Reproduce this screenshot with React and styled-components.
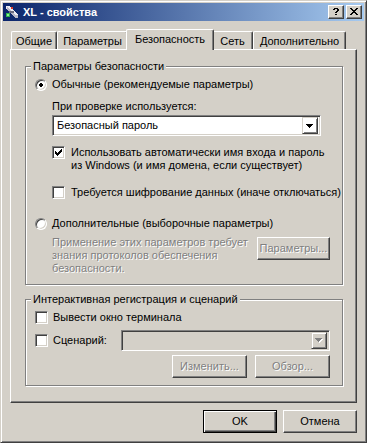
import React from 'react'
import styled, { createGlobalStyle } from 'styled-components'

const FACE = '#d4d0c8'
const SHADOW = '#808080'
const DARK = '#404040'

const GlobalStyle = createGlobalStyle`
  html, body {
    margin: 0;
    padding: 0;
    background: ${FACE};
  }
  body {
    font-family: "Liberation Sans", Arial, sans-serif;
    font-size: 11px;
    color: #000;
  }
`

// pixel-art helper for the little classic glyphs
const toPath = (rows) =>
  rows
    .map((r, y) => [...r].map((c, x) => (c === 'X' ? `M${x} ${y}h1v1h-1z` : '')).join(''))
    .join('')

const CHECK = ['......X', '.....XX', 'X...XXX', 'XX.XXX.', 'XXXXX..', '.XXX...', '..X....']
const CLOSE = ['XX....XX', '.XX..XX.', '..XXXX..', '...XX...', '..XXXX..', '.XX..XX.', 'XX....XX']
const HELP = ['.XXXX.', 'XX..XX', '....XX', '...XX.', '..XX..', '......', '..XX..']
const ARROW = ['XXXXXXX', '.XXXXX.', '..XXX..', '...X...']
const DOT = ['.XX.', 'XXXX', 'XXXX', '.XX.']

const Pixels = ({ rows, color = '#000', etched }) => {
  const w = rows[0].length
  const h = rows.length
  const d = toPath(rows)
  return (
    <svg width={etched ? w + 1 : w} height={etched ? h + 1 : h} shapeRendering="crispEdges">
      {etched && <path d={d} fill="#fff" transform="translate(1 1)" />}
      <path d={d} fill={etched ? SHADOW : color} />
    </svg>
  )
}

const Window = styled.div`
  box-sizing: border-box;
  width: 367px;
  height: 443px;
  background: ${FACE};
  border: 1px solid;
  border-color: ${FACE} ${DARK} ${DARK} ${FACE};
  box-shadow: inset 1px 1px 0 #fff, inset -1px -1px 0 ${SHADOW};
  padding: 2px;
  display: flex;
  flex-direction: column;
`

const TitleBar = styled.div`
  height: 18px;
  display: flex;
  align-items: center;
  padding: 0 2px 0 1px;
  background: linear-gradient(to right, #0a246a, #a6caf0);
  color: #fff;
`

const TitleText = styled.span`
  flex: 1;
  margin-left: 3px;
  font-weight: bold;
  font-size: 11px;
  line-height: 13px;
`

const CaptionButton = styled.div`
  box-sizing: border-box;
  width: 16px;
  height: 14px;
  margin-left: ${(p) => p.$gap || 0}px;
  background: ${FACE};
  border: 1px solid;
  border-color: #fff ${DARK} ${DARK} #fff;
  box-shadow: inset -1px -1px 0 ${SHADOW};
  display: flex;
  align-items: center;
  justify-content: center;
  padding: 0 1px 1px 0;
`

const Body = styled.div`
  flex: 1;
  margin-top: 1px;
  padding: 7px;
  display: flex;
  flex-direction: column;
`

const TabStrip = styled.div`
  display: flex;
  align-items: flex-end;
  height: 20px;
  padding-left: 1px;
`

const Tab = styled.div`
  position: relative;
  z-index: ${(p) => (p.$active ? 2 : 1)};
  box-sizing: border-box;
  width: ${(p) => (p.$active ? p.$w + 4 : p.$w)}px;
  height: ${(p) => (p.$active ? 21 : 18)}px;
  margin: 0 ${(p) => (p.$active ? -2 : 0)}px ${(p) => (p.$active ? -1 : 0)}px;
  padding-top: 3px;
  background: ${FACE};
  border-top: 1px solid #fff;
  border-left: 1px solid #fff;
  border-right: 1px solid ${DARK};
  border-radius: 2px 2px 0 0;
  box-shadow: inset -1px 0 0 ${SHADOW};
  text-align: center;
  line-height: 13px;
  white-space: nowrap;
`

const Panel = styled.div`
  box-sizing: border-box;
  height: 354px;
  border: 1px solid;
  border-color: #fff ${DARK} ${DARK} #fff;
  box-shadow: inset -1px -1px 0 ${SHADOW};
  padding: 16px 13px 0 14px;
`

const Group = styled.div`
  position: relative;
  margin-top: ${(p) => p.$top || 0}px;
  padding: 0 12px ${(p) => p.$bottom}px 9px;
  border: 1px solid ${SHADOW};
  box-shadow: inset 1px 1px 0 #fff, 1px 1px 0 #fff;
`

const Legend = styled.span`
  position: absolute;
  top: -7px;
  left: 5px;
  padding: 0 2px;
  background: ${FACE};
  line-height: 13px;
`

const Row = styled.div`
  display: flex;
  align-items: ${(p) => p.$align || 'center'};
  justify-content: ${(p) => p.$justify || 'flex-start'};
  gap: ${(p) => p.$gap || 0}px;
  margin-top: ${(p) => p.$top || 0}px;
  margin-left: ${(p) => p.$indent || 0}px;
  line-height: 13px;
`

const Label = styled.span`
  margin-left: ${(p) => p.$gap || 0}px;
  color: ${(p) => (p.$disabled ? SHADOW : '#000')};
  text-shadow: ${(p) => (p.$disabled ? '1px 1px 0 #fff' : 'none')};
  white-space: nowrap;
`

const RadioCircle = styled.span`
  box-sizing: border-box;
  flex: none;
  width: 12px;
  height: 12px;
  border-radius: 50%;
  border: 1px solid;
  border-color: ${SHADOW} #fff #fff ${SHADOW};
  box-shadow: inset 1px 1px 0 ${DARK}, inset -1px -1px 0 ${FACE};
  background: #fff;
  display: flex;
  align-items: center;
  justify-content: center;
`

const CheckBox = styled.span`
  box-sizing: border-box;
  flex: none;
  width: 13px;
  height: 13px;
  border: 1px solid;
  border-color: ${SHADOW} #fff #fff ${SHADOW};
  box-shadow: inset 1px 1px 0 ${DARK}, inset -1px -1px 0 ${FACE};
  background: #fff;
  display: flex;
  align-items: center;
  justify-content: center;
`

const Combo = styled.div`
  box-sizing: border-box;
  width: ${(p) => p.$w}px;
  height: 21px;
  margin-top: ${(p) => p.$top || 0}px;
  margin-left: ${(p) => (p.$auto ? 'auto' : `${p.$indent || 0}px`)};
  padding: 2px;
  border: 1px solid;
  border-color: ${SHADOW} #fff #fff ${SHADOW};
  box-shadow: inset 1px 1px 0 ${DARK}, inset -1px -1px 0 ${FACE};
  background: ${(p) => (p.$disabled ? FACE : '#fff')};
  display: flex;
  align-items: center;
`

const ComboValue = styled.span`
  flex: 1;
  padding-left: 2px;
  line-height: 13px;
`

const ComboArrow = styled.span`
  box-sizing: border-box;
  width: 16px;
  height: 17px;
  border: 1px solid;
  border-color: ${FACE} ${DARK} ${DARK} ${FACE};
  box-shadow: inset 1px 1px 0 #fff, inset -1px -1px 0 ${SHADOW};
  display: flex;
  align-items: center;
  justify-content: center;
  padding: 0 1px 0 0;
`

const PushButton = styled.div`
  box-sizing: border-box;
  flex: none;
  width: ${(p) => p.$w || 75}px;
  height: 23px;
  margin-top: ${(p) => p.$top || 0}px;
  background: ${FACE};
  border: 1px solid;
  border-color: ${(p) => (p.$default ? '#000' : `#fff ${DARK} ${DARK} #fff`)};
  box-shadow: ${(p) =>
    p.$default
      ? `inset 1px 1px 0 #fff, inset -1px -1px 0 ${DARK}, inset -2px -2px 0 ${SHADOW}`
      : `inset -1px -1px 0 ${SHADOW}`};
  color: ${(p) => (p.$disabled ? SHADOW : '#000')};
  text-shadow: ${(p) => (p.$disabled ? '1px 1px 0 #fff' : 'none')};
  display: flex;
  align-items: center;
  justify-content: center;
  line-height: 13px;
`

const ButtonBar = styled.div`
  display: flex;
  justify-content: flex-end;
  gap: ${(p) => p.$gap}px;
  margin-top: ${(p) => p.$top || 0}px;
`

const Radio = ({ checked, children, gap = 5 }) => (
  <>
    <RadioCircle>{checked && <Pixels rows={DOT} />}</RadioCircle>
    <Label $gap={gap}>{children}</Label>
  </>
)

const Check = ({ checked, children, gap = 5 }) => (
  <>
    <CheckBox>{checked && <Pixels rows={CHECK} />}</CheckBox>
    <Label $gap={gap}>{children}</Label>
  </>
)

const AppIcon = () => (
  <svg width="16" height="16" viewBox="0 0 16 16" shapeRendering="crispEdges">
    <path d="M2 2h3l9 9v3h-3L2 5z" fill="#b8b8c8" />
    <path d="M2 2h3l9 9h-2L3 3v2H2z" fill="#ececf4" />
    <path d="M5 7h5v2H5z" fill="#6c6c80" />
    <path d="M2 9h4v4H2z" fill="#2bb24c" />
    <path d="M3 10h2v2H3z" fill="#8ef08e" />
    <path d="M7 3h2v2H7z" fill="#d83a2a" />
  </svg>
)

const TABS = [
  { label: 'Общие', w: 46 },
  { label: 'Параметры', w: 71 },
  { label: 'Безопасность', w: 84, active: true },
  { label: 'Сеть', w: 41 },
  { label: 'Дополнительно', w: 93 },
]

export default function App() {
  return (
    <>
      <GlobalStyle />
      <Window>
        <TitleBar>
          <AppIcon />
          <TitleText>XL - свойства</TitleText>
          <CaptionButton>
            <Pixels rows={HELP} />
          </CaptionButton>
          <CaptionButton $gap={2}>
            <Pixels rows={CLOSE} />
          </CaptionButton>
        </TitleBar>

        <Body>
          <TabStrip>
            {TABS.map((t) => (
              <Tab key={t.label} $w={t.w} $active={t.active}>
                {t.label}
              </Tab>
            ))}
          </TabStrip>

          <Panel>
            <Group $bottom={9}>
              <Legend>Параметры безопасности</Legend>
              <Row $top={11}>
                <Radio checked>Обычные (рекомендуемые параметры)</Radio>
              </Row>
              <Row $top={9} $indent={17}>
                <Label>При проверке используется:</Label>
              </Row>
              <Combo $top={2} $indent={17} $w={269}>
                <ComboValue>Безопасный пароль</ComboValue>
                <ComboArrow>
                  <Pixels rows={ARROW} />
                </ComboArrow>
              </Combo>
              <Row $top={10} $indent={17} $align="flex-start">
                <Check checked gap={6}>
                  Использовать автоматически имя входа и пароль
                  <br />
                  из Windows (и имя домена, если существует)
                </Check>
              </Row>
              <Row $top={14} $indent={17}>
                <Check gap={6}>Требуется шифрование данных (иначе отключаться)</Check>
              </Row>
              <Row $top={18}>
                <Radio>Дополнительные (выборочные параметры)</Radio>
              </Row>
              <Row $top={6} $indent={17} $align="flex-start" $justify="space-between">
                <Label $disabled>
                  Применение этих параметров требует
                  <br />
                  знания протоколов обеспечения
                  <br />
                  безопасности.
                </Label>
                <PushButton $w={73} $top={1} $disabled>
                  Параметры...
                </PushButton>
              </Row>
            </Group>

            <Group $top={14} $bottom={7}>
              <Legend>Интерактивная регистрация и сценарий</Legend>
              <Row $top={11}>
                <Check>Вывести окно терминала</Check>
              </Row>
              <Row $top={6}>
                <Check>Сценарий:</Check>
                <Combo $auto $w={209} $disabled>
                  <ComboValue />
                  <ComboArrow>
                    <Pixels rows={ARROW} etched />
                  </ComboArrow>
                </Combo>
              </Row>
              <ButtonBar $top={4} $gap={8}>
                <PushButton $disabled>Изменить...</PushButton>
                <PushButton $disabled>Обзор...</PushButton>
              </ButtonBar>
            </Group>
          </Panel>

          <ButtonBar $top={7} $gap={6}>
            <PushButton $w={74} $default>
              OK
            </PushButton>
            <PushButton $w={74}>Отмена</PushButton>
          </ButtonBar>
        </Body>
      </Window>
    </>
  )
}
